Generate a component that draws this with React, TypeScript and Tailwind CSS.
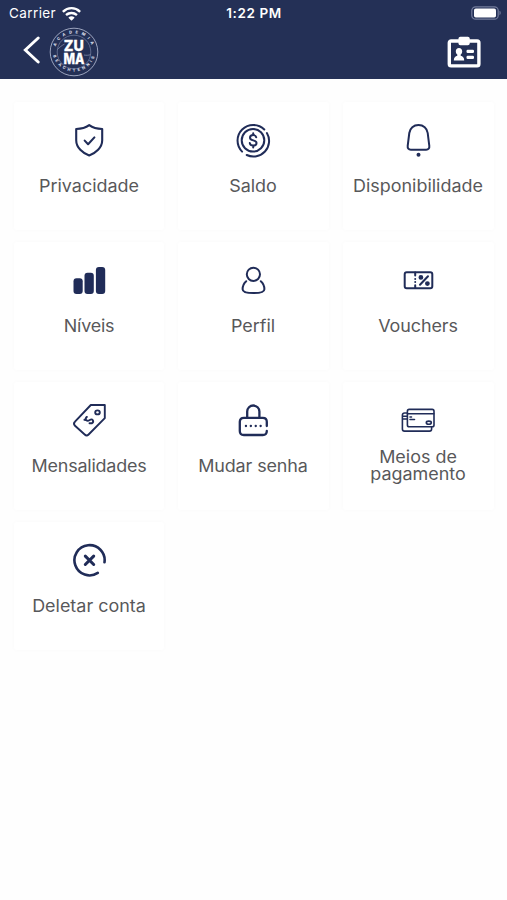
// Account settings menu: status bar, header and a grid of shortcut cards.

import type { ReactNode } from "react";
import clsx from "clsx";

type MenuItem = {
  label: string;
  icon: ReactNode;
  className?: string;
};

function Icon({ children, width = 1.9 }: { children: ReactNode; width?: number }) {
  return (
    <svg
      viewBox="0 0 36 36"
      className="size-9"
      fill="none"
      stroke="currentColor"
      strokeWidth={width}
      strokeLinecap="round"
      strokeLinejoin="round"
    >
      {children}
    </svg>
  );
}

const ITEMS: MenuItem[] = [
  {
    label: "Privacidade",
    icon: (
      <Icon width={2.1}>
        <path d="M18.2 3.2C14.2 6.2 9.8 7 5.2 7v11.2c0 7.4 6.6 13 13 15.2 6.4-2.2 13-7.8 13-15.2V7c-4.6 0-9-.8-13-3.8Z" />
        <path d="m13.7 18.6 3.4 3.6 6.3-6.8" />
      </Icon>
    ),
  },
  {
    label: "Saldo",
    icon: (
      <Icon width={2}>
        <path d="M7.1 29.6A15.6 15.6 0 0 1 29.3 7.5" />
        <path d="M31.9 11A15.6 15.6 0 0 1 11.7 33" />
        <circle cx="18" cy="18.3" r="11.3" />
        <path d="M21.2 15.3c-.3-1.5-1.6-2.200-3-2.200-1.800 0-3.200 1-3.200 2.600 0 3.400 6.500 1.900 6.500 5.200 0 1.700-1.500 2.700-3.300 2.700-1.700 0-3.100-.8-3.400-2.500M18.200 11.300v1.800M18.200 23.600v1.800" />
      </Icon>
    ),
  },
  {
    label: "Disponibilidade",
    icon: (
      <Icon width={2}>
        <path d="M18.5 3c-4.9 0-8.6 3.3-9.2 8L7.7 23.8c-.3 2.5.9 3.9 3.1 3.9h15.4c2.2 0 3.4-1.4 3.1-3.9L27.7 11c-.6-4.7-4.3-8-9.2-8Z" />
        <circle cx="18.5" cy="32.7" r="2" fill="currentColor" stroke="none" />
      </Icon>
    ),
  },
  {
    label: "Níveis",
    className: "tracking-[-0.2px]",
    icon: (
      <Icon>
        <g fill="currentColor" stroke="none">
          <rect x="2.5" y="16.3" width="9.2" height="15.7" rx="3" />
          <rect x="13.5" y="10.8" width="9.3" height="21.2" rx="3" />
          <rect x="24.9" y="5" width="9.3" height="27" rx="3" />
        </g>
      </Icon>
    ),
  },
  {
    label: "Perfil",
    icon: (
      <Icon width={2}>
        <circle cx="18.4" cy="12.3" r="6.6" />
        <path d="M11.2 19.2c-2.300 2-3.600 4.900-3.600 8 0 2.500 4.600 3.900 10.900 3.900s10.900-1.400 10.900-3.900c0-3.100-1.300-6-3.600-8" />
      </Icon>
    ),
  },
  {
    label: "Vouchers",
    className: "tracking-[-0.1px]",
    icon: (
      <Icon width={2}>
        <rect x="4.7" y="10.2" width="27.6" height="16" rx="2" />
        <path d="M15.2 10.5v3M15.2 17v.1M15.2 20v.1M15.2 23.3V26M28 14.2l-8 8.6" />
        <circle cx="20.9" cy="15.4" r="1.4" fill="currentColor" />
        <circle cx="27.4" cy="21.6" r="1.4" fill="currentColor" />
      </Icon>
    ),
  },
  {
    label: "Mensalidades",
    className: "tracking-[-0.2px]",
    icon: (
      <Icon>
        <path d="M19.8 3h14v13.2L17.6 32.5c-1.3 1.3-2.6 1.3-3.900 0L4 23.800c-1.300-1.300-1.300-2.800 0-4.100Z" />
        <ellipse cx="26.5" cy="10.4" rx="2.3" ry="2" />
        <path d="M15.900 14.900c-1.300.9-1.500 2.300-.6 3.300 1.100 1.100 2.400.5 3.500-.2 1.200-.8 2.300-.9 3 .2.700 1.200.2 2.400-.9 3.100M14.700 18l-1.300-.2M21 21.300h-2.500" />
      </Icon>
    ),
  },
  {
    label: "Mudar senha",
    className: "tracking-[-0.1px]",
    icon: (
      <Icon width={2.300}>
        <path d="M12.200 15.500V9.600a6.100 6.100 0 0 1 12.200 0v5.900" />
        <path d="M31.800 24v-4.200c0-2.600-1.400-4-4-4h-19c-2.600 0-4 1.400-4 4v9.200c0 2.600 1.400 4 4 4h19c2.600 0 4-1.400 4-4" />
        <path d="M10.900 24h.1M15.800 24h.1M20.700 24h.1M25.600 24h.1" />
      </Icon>
    ),
  },
  {
    label: "Meios de pagamento",
    icon: (
      <Icon width={1.6}>
        <rect x="7.4" y="7.4" width="26.6" height="17.4" rx="1.8" />
        <path d="M7.5 11.8h26.300M10 15h1.500M10 17.500h4.500" />
        <ellipse cx="28.8" cy="20.7" rx="2.5" ry="1.6" />
        <path d="M7 11H4.500c-1.300 0-2.100.8-2.100 2v14c0 1.300.8 2.100 2.100 2.100h25c1.300 0 2.100-.8 2.100-2.100v-2M2.500 14.200H7M2.500 17H7" />
      </Icon>
    ),
  },
  {
    label: "Deletar conta",
    icon: (
      <Icon width={2.6}>
        <path d="M33.5 20.300A15.100 15.100 0 1 0 26.800 30.900" />
        <path d="m14.300 14.100 8.400 8.400M22.700 14.100l-8.400 8.400" strokeWidth="3" />
      </Icon>
    ),
  },
];

function StatusBar() {
  return (
    <div className="grid h-[27px] grid-cols-3 items-center pl-[9px] pr-[8px] text-[13.5px] leading-none">
      <div className="flex items-center gap-[6px]">
        <span className="tracking-[0.4px]">Carrier</span>
        <svg viewBox="0 0 19 14" className="h-[14px] w-[19px]" fill="currentColor">
          <path d="M9.500 0C5.900 0 2.700 1.400.3 3.700c-.2.200-.2.400 0 .6l1.100 1.100c.2.200.4.200.6 0a10.700 10.700 0 0 1 15 0c.2.200.4.200.6 0l1.100-1.100c.2-.2.200-.4 0-.6A13.200 13.200 0 0 0 9.500 0Z" />
          <path d="M9.500 4.700c-2.300 0-4.400.9-6 2.300-.2.200-.2.400 0 .6l1.100 1.200c.2.200.4.200.6 0a6.400 6.400 0 0 1 8.600 0c.2.200.4.200.6 0l1.100-1.200c.2-.2.200-.4 0-.6a8.900 8.900 0 0 0-6-2.300Z" />
          <path d="M9.500 9.300c-1.100 0-2 .4-2.800 1-.2.200-.2.400 0 .6l2.500 2.500c.2.200.4.200.6 0l2.500-2.500c.2-.2.200-.4 0-.6-.8-.6-1.700-1-2.800-1Z" />
        </svg>
      </div>
      <span className="text-center font-semibold tracking-[0.6px]">1:22 PM</span>
      <svg viewBox="0 0 31 14" className="-mr-[3px] -mt-[1px] h-[14px] w-[31px] justify-self-end">
        <rect x=".8" y=".8" width="26.4" height="12.4" rx="3.8" fill="none" stroke="#737c9c" strokeWidth="1.2" />
        <rect x="3" y="2.500" width="22" height="9" rx="1.8" fill="#fff" />
        <path d="M28.500 4.800c1.600.5 1.600 3.900 0 4.400Z" fill="#737c9c" />
      </svg>
    </div>
  );
}

function Logo() {
  return (
    <svg viewBox="0 0 50 50" className="size-[50px]" fill="none">
      <defs>
        <path id="ring-top" d="M6.200 30a19.300 19.300 0 1 1 37.600 0" />
        <path id="ring-bottom" d="M3.400 23a21.600 21.600 0 1 0 43.200 0" />
      </defs>
      <circle cx="25" cy="25" r="23.8" stroke="#a9b1c9" strokeWidth=".9" />
      <circle cx="25" cy="25" r="16.8" stroke="#7681a3" strokeWidth=".7" />
      <g fill="#d3d8e5" fontSize="4" fontWeight="800" fontFamily="Inter, sans-serif">
        <text textAnchor="middle" letterSpacing="3.4">
          <textPath href="#ring-top" startOffset="51%">ACADEMIA</textPath>
        </text>
        <text textAnchor="middle" letterSpacing="2.6">
          <textPath href="#ring-bottom" startOffset="51%">BEACHTENNIS</textPath>
        </text>
      </g>
      <path d="M8.500 22.500c2-2.200 4.500-4.200 7-5.400M35 28c2.200.5 4.500.3 6.500-.3" stroke="#8d97b5" strokeWidth=".7" />
      <g fill="#fff" stroke="#fff" strokeWidth=".3" fontSize="14.7" fontWeight="800" fontFamily="Inter, sans-serif">
        <text x="14.800" y="24.300" textLength="20" lengthAdjust="spacingAndGlyphs">ZU</text>
        <text x="14.500" y="36.700" textLength="21" lengthAdjust="spacingAndGlyphs">MA</text>
      </g>
    </svg>
  );
}

function Header() {
  return (
    <header className="h-[79px] bg-[#243056] text-white">
      <StatusBar />
      <div className="flex h-[50px] items-center justify-between pl-[22px] pr-[26px]">
        <div className="flex items-center gap-[8px]">
          <button aria-label="Voltar" className="-mt-[4px]">
            <svg
              viewBox="0 0 19 28"
              className="h-[28px] w-[19px]"
              fill="none"
              stroke="currentColor"
              strokeWidth="2.9"
              strokeLinecap="round"
            >
              <path d="M16.200 2 3.300 14l12.900 12" />
            </svg>
          </button>
          <Logo />
        </div>
        <button aria-label="Carteirinha">
          <svg viewBox="0 0 34 32" className="h-[32px] w-[34px]" fill="currentColor">
            <rect x="2.3" y="5" width="29.6" height="24.9" rx="1.8" fill="none" stroke="currentColor" strokeWidth="3.4" />
            <rect x="11.500" y=".7" width="11.200" height="8.600" rx="1.8" />
            <path d="M12 12c-2 0-3.200 1.300-3.200 3.200 0 1.400.6 2.600 1.500 3.300v1.300c-2 .7-3.500 1.500-3.500 4.600h10.400c0-3.100-1.500-3.900-3.500-4.600v-1.300c.9-.7 1.500-1.900 1.500-3.300 0-1.900-1.200-3.200-3.200-3.200Z" />
            <rect x="19.500" y="13.700" width="7.500" height="3.200" rx="1.200" />
            <rect x="19.500" y="19.700" width="7.500" height="3.200" rx="1.200" />
          </svg>
        </button>
      </div>
    </header>
  );
}

function MenuCard({ label, icon, className }: MenuItem) {
  return (
    <button className="mx-[7px] my-[6px] flex flex-col items-center rounded-[3px] bg-white pt-[20px] text-[#202c58] shadow-[0_0_5px_rgba(0,0,0,0.022)]">
      {icon}
      <span
        className={clsx(
          "mt-[10px] flex h-9 w-[132px] scale-x-[1.055] items-center justify-center text-center text-[17px] leading-[17px] text-[#58585a]",
          className,
        )}
      >
        {label}
      </span>
    </button>
  );
}

export default function App() {
  return (
    <div className="min-h-screen bg-[#fefefe] font-['Inter',sans-serif]">
      <Header />
      <main className="grid auto-rows-[140px] grid-cols-3 px-[6.5px] pt-[17px]">
        {ITEMS.map((item) => (
          <MenuCard key={item.label} {...item} />
        ))}
      </main>
    </div>
  );
}
